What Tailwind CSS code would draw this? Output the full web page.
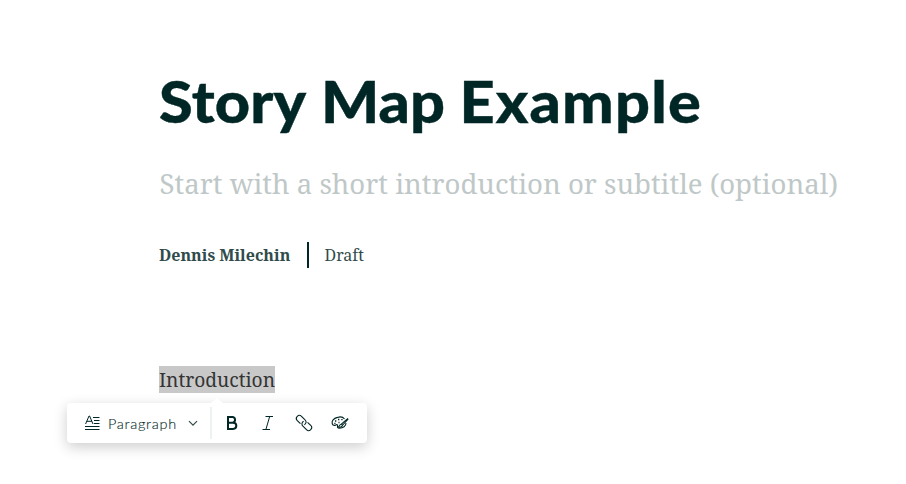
<!DOCTYPE html>
<html lang="en">
<head>
<meta charset="utf-8">
<title>Story Map Example</title>
<script src="https://cdn.jsdelivr.net/npm/@tailwindcss/browser@4"></script>
</head>
<body class="bg-white w-[906px] h-[484px] overflow-hidden font-['Noto_Serif','DejaVu_Serif',serif] text-[#304b4b]">
<main class="flex flex-col items-start pl-[159px] pt-[67px] whitespace-nowrap">
  <h1 class="flex gap-[13.5px] origin-left scale-x-[1.075] font-['Lato',sans-serif] font-black text-[57px] leading-[68px] text-[#002625] [-webkit-text-stroke:0.4px_#002625]"><span class="tracking-[0.2px]">Story </span><span class="tracking-[0px]">Map </span><span class="tracking-[1.100px]">Example</span></h1>
  <p class="mt-[28px] pl-[0.5px] text-[27.6px] leading-[40px] text-[#bfc8c8]">Start with a short introduction or subtitle (optional)</p>
  <div class="mt-[39px] h-[26px] flex items-center text-[16px] leading-[26px]">
    <span class="font-bold w-[148px]">Dennis Milechin</span>
    <span class="w-[2px] h-[26px] bg-[#002625]"></span>
    <span class="ml-[15.5px]">Draft</span>
  </div>
  <p class="mt-[98px] w-[116px] h-[27px] bg-[#c8c8c8] text-[19.200px] leading-[28px] text-[#343434]">Introduction</p>
</main>
<div class="relative mt-[10px] ml-[67px] w-[300px] h-[40px] rounded-[4px] bg-white shadow-[0_4px_14px_rgba(0,0,0,0.2)] flex items-center">
  <span class="absolute left-[144px] -top-[5px] w-0 h-0 border-x-[6px] border-x-transparent border-b-[5px] border-b-white"></span>
  <button class="flex items-center w-[143px] h-full pl-[18px]">
    <svg class="w-[15px] h-[16px]" viewBox="0 0 15 16" fill="none" stroke="#002625"><path d="M.6 9 4 1h.6L8 9M1.8 6.300h5M8 2.500h6.500M9 5.500h5.500M9 8.500h5.500M0 11.500h14.500M0 14.500h14.500"/></svg>
    <span class="ml-[8px] w-[69px] pt-px text-left font-['Lato',sans-serif] font-light text-[14.500px] tracking-[0.700px] leading-5 text-[#002625] [-webkit-text-stroke:0.1px_#002625]">Paragraph</span>
    <svg class="ml-[11px] w-[10px] h-[7px]" viewBox="0 0 10 7" fill="none" stroke="#304b4b" stroke-width="1.200"><path d="m1 1.200 4 4 4-4"/></svg>
  </button>
  <span class="w-[2px] h-[32px] bg-[#edf1f1]"></span>
  <svg class="ml-[14px] w-[13px] h-[16px]" viewBox="0 0 13 16" fill="none" stroke="#002625" stroke-width="2"><path d="M2 2h4.700a2.900 2.900 0 0 1 0 5.700H2M2 7.700h5.200a3.100 3.100 0 0 1 0 6.200H2M2 1v14"/></svg>
  <svg class="ml-[23px] w-[12px] h-[16px]" viewBox="0 0 12 16" fill="none" stroke="#002625"><path d="M3.500 1.500H11M.5 14.500h7.500M7.700 1.500 3.900 14.500"/></svg>
  <svg class="ml-[21px] w-[18px] h-[18px]" viewBox="0 0 18 18" fill="none" stroke="#002625" stroke-width="1.100"><g transform="rotate(45 9 9)"><path d="M7 12H2.500a3 3 0 0 1 0-6h5a3 3 0 0 1 3 4M11 6h4.500a3 3 0 0 1 0 6h-5a3 3 0 0 1-3-4"/></g></svg>
  <svg class="ml-[18px] w-[18px] h-[16px]" viewBox="0 0 18 16" fill="none" stroke="#002625" stroke-width="1.100"><path d="M13.500 4C12 2 9 1.600 6.500 2.400 2.500 3.500.5 6 1.200 8.500c.6 2 2.300 2.300 3.500 1.500 1.300-.8 2.200 0 1.800 1-.3 1.300.3 2.200 2 2.100 3.500 0 6.600-2 6.500-5"/><path d="m17 3.400-6.600 5.700 1.100 1.200L17.300 4M10.200 9.300c-1.500 0-1.600 1.600-2.700 2.700 1.500.4 3.400.1 3.900-1.500"/><path d="M4 6h1.300M7 4.500h1.300M10.300 4.700h1.300M3.300 8.300h1.200M7.500 7.500h1" stroke-width="1.300"/></svg>
</div>
</body>
</html>
